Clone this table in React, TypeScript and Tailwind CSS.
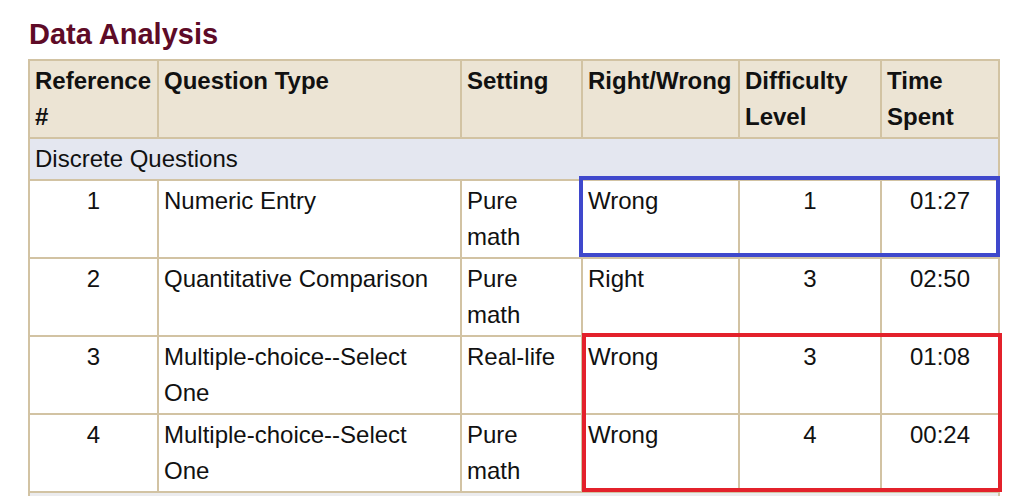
import React from "react";

const rows = [
  { ref: "1", type: "Numeric Entry", setting: "Pure math", rw: "Wrong", diff: "1", time: "01:27" },
  { ref: "2", type: "Quantitative Comparison", setting: "Pure math", rw: "Right", diff: "3", time: "02:50" },
  { ref: "3", type: "Multiple-choice--Select One", setting: "Real-life", rw: "Wrong", diff: "3", time: "01:08" },
  { ref: "4", type: "Multiple-choice--Select One", setting: "Pure math", rw: "Wrong", diff: "4", time: "00:24" },
];

const cell = "border-2 border-[#d2c3a3] align-top pl-[5px] pr-[5px] pt-[2px] pb-[2px] leading-[36px]";

export default function App() {
  return (
    <div className="relative bg-white w-[1015px] min-h-[496px] overflow-hidden" style={{ fontFamily: '"Liberation Sans", Arial, sans-serif' }}>
      <div className="pl-[29px] pt-[17px]">
        <h1 className="text-[29px] leading-[34px] font-bold text-[#5e0b27] mb-[8px]">Data Analysis</h1>
      </div>
      <table className="ml-[28px] border-collapse table-fixed w-[970px] text-[24px] text-[#111]">
        <colgroup>
          <col className="w-[129px]" />
          <col className="w-[303px]" />
          <col className="w-[121px]" />
          <col className="w-[157px]" />
          <col className="w-[142px]" />
          <col className="w-[118px]" />
        </colgroup>
        <thead>
          <tr className="bg-[#ece4d4] font-bold text-left">
            <th className={cell + " h-[78px]"}>Reference #</th>
            <th className={cell}>Question Type</th>
            <th className={cell}>Setting</th>
            <th className={cell + " whitespace-nowrap pr-0"}>Right/Wrong</th>
            <th className={cell}>Difficulty Level</th>
            <th className={cell}>Time Spent</th>
          </tr>
        </thead>
        <tbody>
          <tr className="bg-[#e4e7f0]">
            <td colSpan={6} className={cell + " h-[42px]"}>Discrete Questions</td>
          </tr>
          {rows.map((r) => (
            <tr key={r.ref} className="bg-white">
              <td className={cell + " text-center h-[78px]"}>{r.ref}</td>
              <td className={cell}>{r.type}</td>
              <td className={cell}>{r.setting}</td>
              <td className={cell}>{r.rw}</td>
              <td className={cell + " text-center"}>{r.diff}</td>
              <td className={cell + " text-center"}>{r.time}</td>
            </tr>
          ))}
          <tr className="bg-[#ececee]">
            <td colSpan={6} className={cell + " h-[42px]"}>&nbsp;</td>
          </tr>
        </tbody>
      </table>
      <div className="absolute left-[579px] top-[176px] w-[421px] h-[81px] border-4 border-[#3f48cc] pointer-events-none" />
      <div className="absolute left-[582px] top-[333px] w-[420px] h-[159px] border-4 border-[#e3212b] pointer-events-none" />
    </div>
  );
}
